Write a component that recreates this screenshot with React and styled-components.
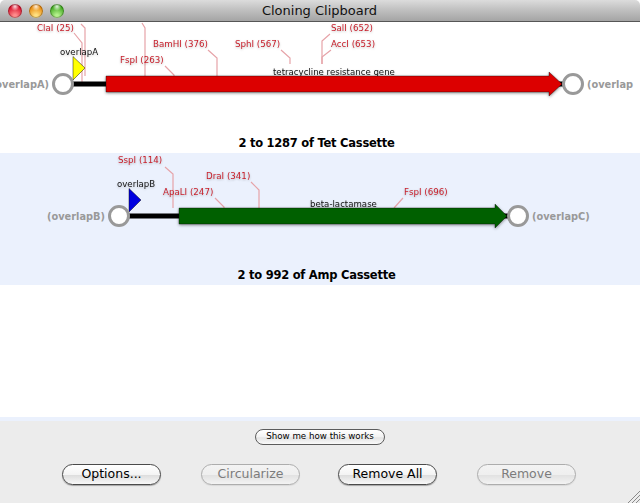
import React from "react";
import styled, { createGlobalStyle } from "styled-components";

const GlobalStyle = createGlobalStyle`
  html, body {
    margin: 0;
    padding: 0;
    background: #fff;
  }
  body {
    font-family: "DejaVu Sans", "Liberation Sans", sans-serif;
  }
`;

const Window = styled.div`
  position: relative;
  width: 640px;
  height: 503px;
  overflow: hidden;
  display: flex;
  flex-direction: column;
  background: #fff;
`;

const TitleBar = styled.div`
  position: relative;
  height: 21px;
  flex: none;
  display: flex;
  align-items: center;
  justify-content: center;
  background: linear-gradient(#dcdcdc, #c4c4c4 40%, #a4a4a4);
  border-bottom: 1px solid #565656;
  border-radius: 5px 5px 0 0;
`;

const Title = styled.div`
  font-size: 13px;
  color: #111;
  line-height: 21px;
  padding-right: 1px;
`;

const Lights = styled.div`
  position: absolute;
  left: 8px;
  top: 4px;
  display: flex;
  gap: 7px;
`;

const Light = styled.div`
  width: 14px;
  height: 14px;
  border-radius: 50%;
  box-shadow: inset 0 0 0 1px rgba(0, 0, 0, 0.28);
  background:
    radial-gradient(circle at 50% 18%, rgba(255, 255, 255, 0.85), rgba(255, 255, 255, 0) 32%),
    radial-gradient(circle at 50% 85%, ${(p) => p.$glow} 10%, ${(p) => p.$color} 70%);
`;

const Row = styled.section`
  height: ${(p) => p.$height}px;
  flex: none;
  display: flex;
  flex-direction: column;
  background: ${(p) => (p.$tinted ? "#ebf1fd" : "#fff")};
`;

const Map = styled.svg`
  display: block;
  flex: none;
  width: 640px;
  height: ${(p) => p.$height}px;
`;

const Caption = styled.div`
  text-align: center;
  font-size: 11.5px;
  letter-spacing: -0.25px;
  font-weight: bold;
  color: #000;
  line-height: 19px;
  padding-right: 7px;
`;

const SiteLabel = styled.text`
  font-size: 8.7px;
  fill: #c8202c;
  filter: drop-shadow(0 1px 1px rgba(0, 0, 0, 0.25));
`;

const SiteLine = styled.polyline`
  fill: none;
  stroke: #e6a3a8;
  stroke-width: 1.2;
`;

const GeneLabel = styled.text`
  font-size: 8.6px;
  fill: #111;
  filter: drop-shadow(0 1px 1px rgba(0, 0, 0, 0.2));
`;

const EndLabel = styled.text`
  font-size: 9.8px;
  font-weight: bold;
  fill: #999;
`;

const Gene = styled.polygon`
  filter: drop-shadow(0 1px 1.5px rgba(0, 0, 0, 0.45));
`;

const Panel = styled.div`
  flex: 1;
  display: flex;
  flex-direction: column;
  align-items: center;
  background: #ececec;
  padding-top: 8px;
`;

const SmallButton = styled.div`
  width: 128px;
  height: 14px;
  line-height: 13px;
  text-align: center;
  font-size: 8.7px;
  color: #000;
  border: 1px solid #5c5c5c;
  border-radius: 8px;
  background: linear-gradient(#fff, #f2f2f2 50%, #e4e4e4 55%, #fafafa);
`;

const ButtonRow = styled.div`
  align-self: stretch;
  display: flex;
  gap: 38px;
  padding-left: 62px;
  margin-top: 19px;
`;

const ButtonPair = styled.div`
  display: flex;
  gap: 40px;
`;

const PushButton = styled.div`
  box-sizing: border-box;
  width: 99px;
  height: 21px;
  line-height: 18px;
  text-align: center;
  font-size: 12.5px;
  border-radius: 11px;
  color: ${(p) => (p.$disabled ? "#7c7c7c" : "#000")};
  border: 1px solid ${(p) => (p.$disabled ? "#adadad" : "#4a4a4a")};
  background: ${(p) =>
    p.$disabled
      ? "linear-gradient(#f3f3f3, #efefef 50%, #e2e2e2 55%, #f3f3f3)"
      : "linear-gradient(#fff, #f4f4f4 50%, #dedede 55%, #f8f8f8)"};
  box-shadow: 0 1px 1px rgba(0, 0, 0, ${(p) => (p.$disabled ? 0.08 : 0.3)});
`;

const Grip = styled.svg`
  position: absolute;
  right: 0;
  bottom: 0;
  width: 13px;
  height: 13px;
`;

const trafficLights = [
  { color: "#d8102a", glow: "#ff8c8c" },
  { color: "#e8890c", glow: "#ffe080" },
  { color: "#3fa81e", glow: "#b4f08c" },
];

const tetMap = {
  top: 22,
  height: 112,
  sites: [
    { label: "ClaI (25)", x: 37, y: 27, line: "81,24 85,28 85,76" },
    { line: "74,33 82,43 82,82" },
    { line: "142,23 145,28 145,76" },
    { label: "FspI (263)", x: 120, y: 59, line: "165,66 174,75 174,76" },
    { label: "BamHI (376)", x: 153, y: 43, line: "208,50 217,58 217,76" },
    { label: "SphI (567)", x: 235, y: 43, line: "281,50 290,58 290,64" },
    { label: "SalI (652)", x: 331, y: 27, line: "330,34 322,41 322,64" },
    { label: "AccI (653)", x: 331, y: 43, line: "331,50 322,57 322,64" },
  ],
  gene: { name: "tetracycline resistance gene", nameX: 273, nameY: 71, color: "#dc0000", from: 106, to: 549, tip: 562, cy: 84 },
  flag: { name: "overlapA", nameX: 60, nameY: 51, color: "#ffff00", x: 73 },
  left: { label: "(overlapA)", cx: 63 },
  right: { label: "(overlap", cx: 573 },
};

const ampMap = {
  top: 153,
  height: 113,
  sites: [
    { label: "SspI (114)", x: 118, y: 159, line: "165,167 173,174 173,208" },
    { label: "ApaLI (247)", x: 163, y: 191, line: "215,198 224,207 224,208" },
    { label: "DraI (341)", x: 206, y: 175, line: "251,182 259,190 259,208" },
    { label: "FspI (696)", x: 404, y: 191, line: "403,198 394,208" },
  ],
  gene: { name: "beta-lactamase", nameX: 310, nameY: 203, color: "#006000", from: 179, to: 495, tip: 507, cy: 216 },
  flag: { name: "overlapB", nameX: 117, nameY: 183, color: "#0000e0", x: 129 },
  left: { label: "(overlapB)", cx: 119 },
  right: { label: "(overlapC)", cx: 518 },
};

const CassetteMap = ({ map }) => {
  const { top, height, sites, gene, flag, left, right } = map;
  const cy = gene.cy;
  return (
    <Map $height={height} viewBox={`0 ${top} 640 ${height}`}>
      {sites.map((s, i) => (
        <SiteLine key={i} points={s.line} />
      ))}
      {sites
        .filter((s) => s.label)
        .map((s) => (
          <SiteLabel key={s.label} x={s.x} y={s.y + 3.5}>
            {s.label}
          </SiteLabel>
        ))}
      <GeneLabel x={gene.nameX} y={gene.nameY + 3.5}>
        {gene.name}
      </GeneLabel>
      <GeneLabel x={flag.nameX} y={flag.nameY + 3.5}>
        {flag.name}
      </GeneLabel>

      <line x1={left.cx + 8} y1={cy} x2={gene.from} y2={cy} stroke="#000" strokeWidth="5" />
      <line x1={gene.tip - 3} y1={cy} x2={right.cx - 8} y2={cy} stroke="#000" strokeWidth="5" />
      <Gene
        fill={gene.color}
        stroke="rgba(0,0,0,0.35)"
        strokeWidth="1"
        points={`${gene.from},${cy - 8} ${gene.to},${cy - 8} ${gene.to},${cy - 12} ${gene.tip},${cy} ${gene.to},${cy + 12} ${gene.to},${cy + 8} ${gene.from},${cy + 8}`}
      />
      <polygon
        fill={flag.color}
        stroke="rgba(0,0,0,0.45)"
        strokeWidth="1"
        points={`${flag.x},${cy - 27.5} ${flag.x + 12},${cy - 16} ${flag.x},${cy - 4}`}
      />
      <circle cx={left.cx} cy={cy} r="9.5" fill="#fff" stroke="#999" strokeWidth="3" />
      <circle cx={right.cx} cy={cy} r="9.5" fill="#fff" stroke="#999" strokeWidth="3" />
      <EndLabel x={left.cx - 14} y={cy + 4} textAnchor="end">
        {left.label}
      </EndLabel>
      <EndLabel x={right.cx + 14} y={cy + 4}>
        {right.label}
      </EndLabel>
    </Map>
  );
};

export default function App() {
  return (
    <Window>
      <GlobalStyle />
      <TitleBar>
        <Lights>
          {trafficLights.map((l) => (
            <Light key={l.color} $color={l.color} $glow={l.glow} />
          ))}
        </Lights>
        <Title>Cloning Clipboard</Title>
      </TitleBar>

      <Row $height={131}>
        <CassetteMap map={tetMap} />
        <Caption>2 to 1287 of Tet Cassette</Caption>
      </Row>
      <Row $height={132} $tinted>
        <CassetteMap map={ampMap} />
        <Caption>2 to 992 of Amp Cassette</Caption>
      </Row>
      <Row $height={132} />
      <Row $height={4} $tinted />

      <Panel>
        <SmallButton>Show me how this works</SmallButton>
        <ButtonRow>
          <ButtonPair>
            <PushButton>Options...</PushButton>
            <PushButton $disabled>Circularize</PushButton>
          </ButtonPair>
          <ButtonPair>
            <PushButton>Remove All</PushButton>
            <PushButton $disabled>Remove</PushButton>
          </ButtonPair>
        </ButtonRow>
      </Panel>

      <Grip viewBox="0 0 13 13">
        <path d="M1 13 L13 1 M5 13 L13 5 M9 13 L13 9" stroke="#8a8a8a" strokeWidth="1" fill="none" />
      </Grip>
    </Window>
  );
}
